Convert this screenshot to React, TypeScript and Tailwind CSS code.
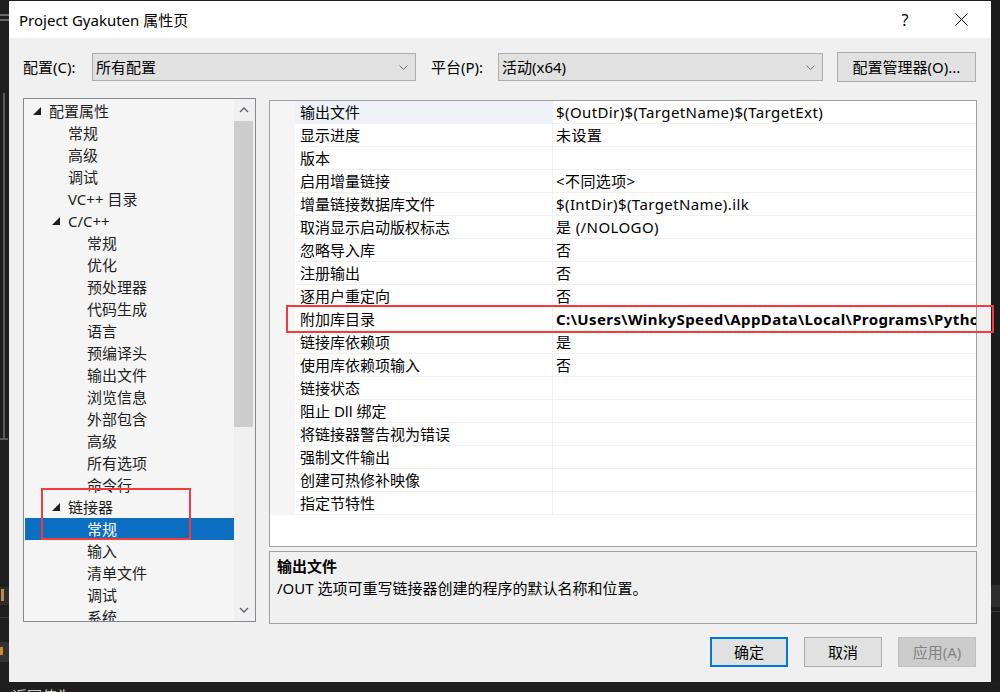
import React from "react";

const FONT = "font-['Noto_Sans','Noto_Sans_CJK_SC',sans-serif]";

type TreeItem = { label: string; level: number; expanded?: boolean; selected?: boolean };

const treeItems: TreeItem[] = [
  { label: "配置属性", level: 0, expanded: true },
  { label: "常规", level: 1 },
  { label: "高级", level: 1 },
  { label: "调试", level: 1 },
  { label: "VC++ 目录", level: 1 },
  { label: "C/C++", level: 1, expanded: true },
  { label: "常规", level: 2 },
  { label: "优化", level: 2 },
  { label: "预处理器", level: 2 },
  { label: "代码生成", level: 2 },
  { label: "语言", level: 2 },
  { label: "预编译头", level: 2 },
  { label: "输出文件", level: 2 },
  { label: "浏览信息", level: 2 },
  { label: "外部包含", level: 2 },
  { label: "高级", level: 2 },
  { label: "所有选项", level: 2 },
  { label: "命令行", level: 2 },
  { label: "链接器", level: 1, expanded: true },
  { label: "常规", level: 2, selected: true },
  { label: "输入", level: 2 },
  { label: "清单文件", level: 2 },
  { label: "调试", level: 2 },
  { label: "系统", level: 2 },
];

// indent per tree level (triangle box starts here)
const indent = ["pl-[8px]", "pl-[27px]", "pl-[46px]"];

const properties: { name: string; value: string; bold?: boolean }[] = [
  { name: "输出文件", value: "$(OutDir)$(TargetName)$(TargetExt)" },
  { name: "显示进度", value: "未设置" },
  { name: "版本", value: "" },
  { name: "启用增量链接", value: "<不同选项>" },
  { name: "增量链接数据库文件", value: "$(IntDir)$(TargetName).ilk" },
  { name: "取消显示启动版权标志", value: "是 (/NOLOGO)" },
  { name: "忽略导入库", value: "否" },
  { name: "注册输出", value: "否" },
  { name: "逐用户重定向", value: "否" },
  {
    name: "附加库目录",
    value: "C:\\Users\\WinkySpeed\\AppData\\Local\\Programs\\Python\\Python37\\libs;%(AdditionalLibraryDirectories)",
    bold: true,
  },
  { name: "链接库依赖项", value: "是" },
  { name: "使用库依赖项输入", value: "否" },
  { name: "链接状态", value: "" },
  { name: "阻止 Dll 绑定", value: "" },
  { name: "将链接器警告视为错误", value: "" },
  { name: "强制文件输出", value: "" },
  { name: "创建可热修补映像", value: "" },
  { name: "指定节特性", value: "" },
];

const Chevron = ({ up = false }: { up?: boolean }) => (
  <svg width="10" height="6" viewBox="0 0 10 6" fill="none">
    <path
      d={up ? "M1 5 L5 1 L9 5" : "M1 1 L5 5 L9 1"}
      stroke="#606060"
      strokeWidth="1.3"
    />
  </svg>
);

const Triangle = () => (
  <svg width="8" height="8" viewBox="0 0 8 8">
    <polygon points="8,0 8,8 0,8" fill="#1e1e1e" />
  </svg>
);

const SelectBox = ({ value, width }: { value: string; width: string }) => (
  <div
    className={`${width} flex h-[28px] items-center justify-between border border-[#adadad] bg-[#e1e1e1] pl-[3px] pr-[7px]`}
  >
    <span className="text-[15px] leading-[20px] text-black">{value}</span>
    <svg width="9" height="5" viewBox="0 0 9 5" fill="none">
      <path d="M0.5 0.5 L4.5 4.5 L8.5 0.5" stroke="#707070" strokeWidth="1" />
    </svg>
  </div>
);

const TreePanel = () => (
  <div className="flex h-[524px] w-[233px] border border-[#828790] bg-[#f5f5f5]">
    <div className="flex flex-1 flex-col overflow-hidden pl-[1px] pt-[1px]">
      {treeItems.map((item, i) => (
        <div
          key={i}
          className={`flex h-[22px] shrink-0 items-center ${indent[item.level]} ${
            item.selected ? "bg-[#0b6ec1] text-white" : "text-[#1e1e1e]"
          }`}
        >
          <div className="flex w-[16px] items-center">{item.expanded && <Triangle />}</div>
          <span className="whitespace-nowrap text-[15px] leading-[22px]">{item.label}</span>
        </div>
      ))}
    </div>
    <div className="flex w-[21px] flex-col bg-[#f0f0f0]">
      <div className="flex h-[22px] items-center justify-center pr-[1px]">
        <Chevron up />
      </div>
      <div className="flex-1">
        <div className="h-[306px] w-[19px] bg-[#cdcdcd]" />
      </div>
      <div className="flex h-[22px] items-center justify-center pr-[1px]">
        <Chevron />
      </div>
    </div>
  </div>
);

const PropertyGrid = () => (
  <div className="flex h-[447px] flex-col overflow-hidden border border-[#a0a0a0] bg-white">
    {properties.map((p, i) => (
      <div key={i} className="flex h-[23px] shrink-0">
        <div className="w-[25px] bg-[#f5f5f5]" />
        <div
          className={`flex w-[258px] items-center border-b border-r border-[#f0f0f0] pl-[5px] ${
            i === 0 ? "bg-[#eef2f8]" : "bg-white"
          }`}
        >
          <span className="whitespace-nowrap text-[15px] leading-[22px] text-black">{p.name}</span>
        </div>
        <div className="flex min-w-0 flex-1 items-center overflow-hidden border-b border-[#f0f0f0] pl-[3px]">
          <span
            className={`whitespace-nowrap text-[15px] leading-[22px] tracking-[0.4px] text-black ${
              p.bold ? "font-bold" : ""
            }`}
          >
            {p.value}
          </span>
        </div>
      </div>
    ))}
  </div>
);

const DescriptionBox = () => (
  <div className="mt-[4px] h-[73px] border border-[#a0a0a0] bg-[#f0f0f0] pl-[7px] pt-[3px]">
    <div className="text-[15px] font-bold leading-[22px] text-black">输出文件</div>
    <div className="text-[15px] leading-[22px] text-black">/OUT 选项可重写链接器创建的程序的默认名称和位置。</div>
  </div>
);

const DialogButton = ({
  label,
  focused,
  disabled,
}: {
  label: string;
  focused?: boolean;
  disabled?: boolean;
}) => (
  <div
    className={`flex h-[30px] w-[78px] items-center justify-center text-[15px] leading-[20px] ${
      focused
        ? "border-2 border-[#0078d7] bg-[#e1e1e1] text-black"
        : disabled
        ? "border border-[#bfbfbf] bg-[#cccccc] text-[#838383]"
        : "border border-[#adadad] bg-[#e1e1e1] text-black"
    }`}
  >
    {label}
  </div>
);

const LeftStrip = () => (
  <div className="flex w-[9px] flex-col bg-[#1e1e1e]">
    <div className="h-[14px]" />
    <div className="h-[2px] bg-[#6a6a6a]" />
    <div className="h-[3px]" />
    <div className="h-[2px] bg-[#6a6a6a]" />
    <div className="h-[72px]" />
    <div className="flex h-[345px]">
      <div className="w-[3px]" />
      <div className="w-[2px] bg-[#5a5a5a]" />
    </div>
    <div className="h-[2px] w-[8px] bg-[#5a5a5a]" />
    <div className="h-[147px]" />
    <div className="h-[18px] bg-[#2d2d2d] pl-[1px] pt-[2px]">
      <div className="h-[12px] w-[3px] bg-[#c08a4a]" />
    </div>
    <div className="h-[12px]" />
    <div className="h-[1px] bg-[#3a3a3a]" />
    <div className="h-[24px]" />
    <div className="h-[20px] bg-[#333333] pt-[5px]">
      <div className="h-[8px] w-[3px] bg-[#d08a30]" />
    </div>
  </div>
);

const RightStrip = () => (
  <div className="flex w-[9px] flex-col bg-[#1b1b1b]">
    <div className="h-[585px]" />
    <div className="h-[22px] bg-[#2d2d2d]" />
    <div className="h-[4px]" />
    <div className="h-[1px] bg-[#3a3a3a]" />
  </div>
);

export default function App() {
  return (
    <div className={`relative flex h-[692px] w-[1000px] flex-col overflow-hidden bg-[#1e1e1e] ${FONT}`}>
      <div className="flex h-[682px] shrink-0">
        <LeftStrip />
        <div className="mt-[1px] flex w-[982px] flex-col bg-[#f0f0f0]">
          {/* title bar */}
          <div className="flex h-[37px] items-center justify-between bg-white pl-[10px]">
            <span className="text-[15px] leading-[20px] text-black">Project Gyakuten 属性页</span>
            <div className="flex items-center">
              <span className="mr-[19px] w-[14px] text-center text-[16px] leading-[20px] text-black">?</span>
              <div className="flex w-[60px] justify-center">
                <svg width="13" height="13" viewBox="0 0 13 13">
                  <path d="M0.5 0.5 L12.5 12.5 M12.5 0.5 L0.5 12.5" stroke="#000" strokeWidth="1" />
                </svg>
              </div>
            </div>
          </div>

          {/* config row */}
          <div className="mt-[14px] flex h-[30px] items-center pl-[14px] pr-[15px]">
            <span className="w-[69px] text-[15px] leading-[20px] text-black">配置(C):</span>
            <SelectBox value="所有配置" width="w-[324px]" />
            <span className="ml-[15px] w-[67px] text-[15px] leading-[20px] text-black">平台(P):</span>
            <SelectBox value="活动(x64)" width="w-[325px]" />
            <div className="ml-[14px] flex h-[30px] flex-1 items-center justify-center border border-[#adadad] bg-[#e1e1e1] text-[15px] leading-[20px] text-black">
              配置管理器(O)...
            </div>
          </div>

          {/* main area */}
          <div className="mt-[16px] flex pl-[14px]">
            <TreePanel />
            <div className="ml-[13px] flex w-[708px] flex-col pt-[2px]">
              <PropertyGrid />
              <DescriptionBox />
            </div>
          </div>

          {/* buttons */}
          <div className="mt-[13px] flex justify-end gap-[16px] pr-[15px]">
            <DialogButton label="确定" focused />
            <DialogButton label="取消" />
            <DialogButton label="应用(A)" disabled />
          </div>
        </div>
        <RightStrip />
      </div>

      {/* IDE text peeking below the dialog */}
      <div className="h-[10px] overflow-hidden pl-[12px] pt-[2px]">
        <span className="text-[15px] leading-[18px] text-[#c8c8c8]">返回值为 · (· ·)</span>
      </div>

      {/* red annotation boxes */}
      <div className="absolute left-[41px] top-[488px] h-[52px] w-[150px] border-2 border-[#f23c3c]" />
      <div className="absolute left-[286px] top-[305px] h-[28px] w-[708px] border-2 border-[#f23c3c]" />
    </div>
  );
}
